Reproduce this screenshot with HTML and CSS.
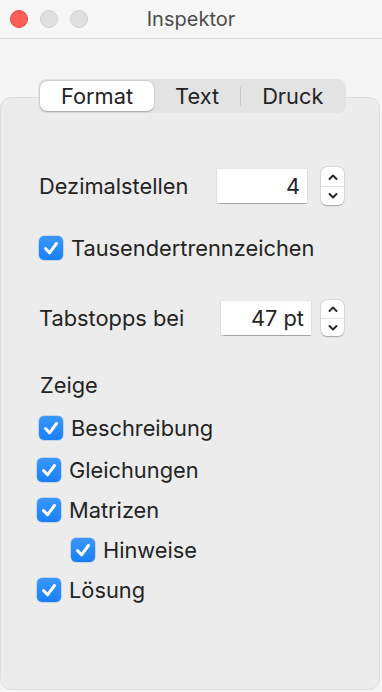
FILE: index.html
```html
<!DOCTYPE html>
<html lang="de">
<head>
<meta charset="utf-8">
<title>Inspektor</title>
<link rel="stylesheet" href="styles.css">
</head>
<body>
<div class="window">
  <div class="titlebar">
    <div class="lights">
      <span class="light red"></span>
      <span class="light gray"></span>
      <span class="light gray"></span>
    </div>
    <div class="title">Inspektor</div>
  </div>
  <div class="content">
    <div class="tabs">
      <div class="seg selected">Format</div>
      <div class="seg">Text</div>
      <div class="sep"></div>
      <div class="seg">Druck</div>
    </div>
    <div class="panel">
      <div class="row field-row r1">
        <span class="label l1">Dezimalstellen</span>
        <span class="field f1">4</span>
        <span class="stepper">
          <svg class="chev up" viewBox="0 0 12 8" width="12" height="8"><path d="M2.5 6 L6 2.5 L9.5 6" fill="none" stroke="#262626" stroke-width="1.9" stroke-linecap="round" stroke-linejoin="round"/></svg>
          <span class="stepline"></span>
          <svg class="chev down" viewBox="0 0 12 8" width="12" height="8"><path d="M2.5 2 L6 5.5 L9.5 2" fill="none" stroke="#262626" stroke-width="1.9" stroke-linecap="round" stroke-linejoin="round"/></svg>
        </span>
      </div>
      <div class="row check-row r2 x38">
        <span class="box"><svg viewBox="0 0 24 24" width="24" height="24"><path d="M6.5 12.5 L10.5 16.8 L17.5 7.5" fill="none" stroke="#fff" stroke-width="3" stroke-linecap="round" stroke-linejoin="round"/></svg></span>
        <span class="clabel">Tausendertrennzeichen</span>
      </div>
      <div class="row field-row r3">
        <span class="label l2">Tabstopps bei</span>
        <span class="field f2">47 pt</span>
        <span class="stepper s2">
          <svg class="chev up" viewBox="0 0 12 8" width="12" height="8"><path d="M2.5 6 L6 2.5 L9.5 6" fill="none" stroke="#262626" stroke-width="1.9" stroke-linecap="round" stroke-linejoin="round"/></svg>
          <span class="stepline"></span>
          <svg class="chev down" viewBox="0 0 12 8" width="12" height="8"><path d="M2.5 2 L6 5.5 L9.5 2" fill="none" stroke="#262626" stroke-width="1.9" stroke-linecap="round" stroke-linejoin="round"/></svg>
        </span>
      </div>
      <div class="row heading r4">Zeige</div>
      <div class="row check-row r5 x38">
        <span class="box"><svg viewBox="0 0 24 24" width="24" height="24"><path d="M6.5 12.5 L10.5 16.8 L17.5 7.5" fill="none" stroke="#fff" stroke-width="3" stroke-linecap="round" stroke-linejoin="round"/></svg></span>
        <span class="clabel">Beschreibung</span>
      </div>
      <div class="row check-row r6 x36">
        <span class="box"><svg viewBox="0 0 24 24" width="24" height="24"><path d="M6.5 12.5 L10.5 16.8 L17.5 7.5" fill="none" stroke="#fff" stroke-width="3" stroke-linecap="round" stroke-linejoin="round"/></svg></span>
        <span class="clabel">Gleichungen</span>
      </div>
      <div class="row check-row r7 x36">
        <span class="box"><svg viewBox="0 0 24 24" width="24" height="24"><path d="M6.5 12.5 L10.5 16.8 L17.5 7.5" fill="none" stroke="#fff" stroke-width="3" stroke-linecap="round" stroke-linejoin="round"/></svg></span>
        <span class="clabel">Matrizen</span>
      </div>
      <div class="row check-row r7 x70">
        <span class="box"><svg viewBox="0 0 24 24" width="24" height="24"><path d="M6.5 12.5 L10.5 16.8 L17.5 7.5" fill="none" stroke="#fff" stroke-width="3" stroke-linecap="round" stroke-linejoin="round"/></svg></span>
        <span class="clabel">Hinweise</span>
      </div>
      <div class="row check-row r7 x36">
        <span class="box"><svg viewBox="0 0 24 24" width="24" height="24"><path d="M6.5 12.5 L10.5 16.8 L17.5 7.5" fill="none" stroke="#fff" stroke-width="3" stroke-linecap="round" stroke-linejoin="round"/></svg></span>
        <span class="clabel">Lösung</span>
      </div>
    </div>
  </div>
</div>
</body>
</html>
```

FILE: styles.css
```css
* { box-sizing: border-box; }
html, body {
  margin: 0;
  padding: 0;
  width: 382px;
  height: 692px;
  background: #f5f5f5;
  font-family: Inter, "Open Sans", "Liberation Sans", sans-serif;
  color: #242424;
  overflow: hidden;
}
.window {
  width: 382px;
  height: 692px;
  display: flex;
  flex-direction: column;
  background: #f5f5f5;
}
.titlebar {
  height: 39px;
  flex: none;
  background: #f6f6f6;
  border-bottom: 1px solid #d9d9d9;
  display: flex;
  align-items: center;
  position: relative;
}
.lights {
  display: flex;
  gap: 12px;
  padding-left: 10px;
  position: absolute;
  left: 0;
  top: 10px;
}
.light {
  width: 18px;
  height: 18px;
  border-radius: 50%;
}
.light.red { background: #fe5f57; border: 1px solid #e2463f; }
.light.gray { background: #e0e0e0; border: 1px solid #d0d0d0; }
.title {
  flex: 1;
  text-align: center;
  font-size: 20px;
  color: #4c4c4c;
  padding-bottom: 1px;
}
.content {
  flex: 1;
  display: flex;
  flex-direction: column;
  padding: 40px 2px 2px 0;
}
.tabs {
  align-self: flex-start;
  margin-left: 38px;
  height: 34px;
  padding: 2px;
  background: #e3e3e3;
  border-radius: 8px;
  display: flex;
  align-items: center;
  position: relative;
  z-index: 2;
  margin-bottom: -16px;
}
.seg {
  height: 30px;
  display: flex;
  align-items: center;
  padding: 0 21px;
  font-size: 21.8px;
  color: #242424;
  border-radius: 7px;
}
.seg.selected {
  background: #ffffff;
  box-shadow: 0 0.5px 1.5px rgba(0,0,0,0.25), 0 0 0 0.5px rgba(0,0,0,0.08);
}
.sep {
  width: 1px;
  height: 19px;
  background: #c9c9c9;
}
.panel {
  flex: 1;
  background: #ececec;
  border: 1px solid #dedede;
  border-radius: 11px;
  padding-top: 16px;
  display: flex;
  flex-direction: column;
}
.row {
  display: flex;
  align-items: center;
  font-size: 21.8px;
}
.field-row { height: 40px; padding-left: 38px; }
.r1 { margin-top: 52px; }
.r2 { margin-top: 30px; }
.r3 { margin-top: 38px; }
.r4 { margin-top: 35px; height: 24px; padding-left: 39px; }
.r5 { margin-top: 19px; }
.r6 { margin-top: 18px; }
.r7 { margin-top: 16px; }
.label.l1 { width: 178px; }
.label.l2 { width: 182px; }
.field {
  height: 34px;
  width: 90px;
  background: #ffffff;
  padding-right: 7px;
  display: flex;
  align-items: center;
  justify-content: flex-end;
  box-shadow: 0 0.5px 1px rgba(0,0,0,0.28), 0 0 0 0.5px rgba(0,0,0,0.06);
}
.stepper {
  margin-left: 14px;
  width: 23px;
  height: 38px;
  border-radius: 6px;
  background: #ffffff;
  box-shadow: 0 0.5px 1.5px rgba(0,0,0,0.28), 0 0 0 0.5px rgba(0,0,0,0.08);
  display: flex;
  flex-direction: column;
  align-items: center;
  justify-content: center;
}
.stepper.s2 { margin-left: 10px; height: 36px; }
.chev { display: block; }
.stepline {
  width: 23px;
  height: 1px;
  background: #e2e2e2;
  margin: 5px 0;
}
.check-row { height: 24px; }
.x38 { padding-left: 38px; }
.x36 { padding-left: 36px; }
.x70 { padding-left: 70px; }
.box {
  width: 24px;
  height: 24px;
  border-radius: 5px;
  background: linear-gradient(#3a97fc, #1a7ff8);
  box-shadow: 0 0 0 0.5px rgba(0,90,220,0.35);
  display: flex;
  flex: none;
}
.clabel { margin-left: 8px; }
```
